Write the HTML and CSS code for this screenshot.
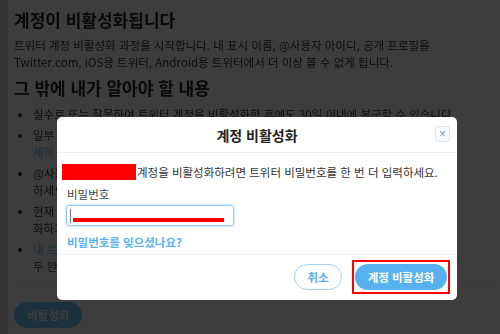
FILE: index.html
```html
<!DOCTYPE html>
<html lang="ko">
<head>
    <meta charset="UTF-8">
    <meta name="viewport" content="width=device-width, initial-scale=1.0">
    <title>계정 비활성화</title>
    <link rel="stylesheet" href="styles.css">
</head>
<body>
    <div id="page" class="dimmed">
        <h1>계정이 비활성화됩니다</h1>
        <p class="intro">트위터 계정 비활성화 과정을 시작합니다. 내 표시 이름, @사용자 아이디, 공개 프로필을<br>Twitter.com, iOS용 트위터, Android용 트위터에서 더 이상 볼 수 없게 됩니다.</p>
        <h2>그 밖에 내가 알아야 할 내용</h2>
        <ul id="notes">
            <li>실수로 또는 잘못하여 트위터 계정을 비활성화한 후에도 30일 이내에 복구할 수 있습니다.</li>
            <li>일부 계정 정보는 Google이나 Bing 같은 검색 엔진에서 계속 보일 수 있습니다. <a href="#">자<br>세히 알아보기</a></li>
            <li>@사용자 아이디만 변경하려면 계정을 비활성화할 필요가 없습니다. 설정에서 수정<br>하세요.</li>
            <li>현재 @사용자 아이디나 이메일 주소를 다른 트위터 계정에 사용하려면 비활성<br>화하기 전에 먼저 변경하세요.</li>
            <li><a href="#">내 트위터 데이터를 다운로드</a>하려면 비활성화하기 전에 요청 및 다운로드를 모<br>두 완료해야 합니다.</li>
        </ul>
        <div id="page-actions">
            <button class="deactivate">비활성화</button>
        </div>
    </div>

    <div id="modal">
        <div class="modal-header">
            <h3>계정 비활성화</h3>
            <button class="close">&times;</button>
        </div>
        <div class="modal-body">
            <p class="confirm-text"><span class="redacted"></span>계정을 비활성화하려면 트위터 비밀번호를 한 번 더 입력하세요.</p>
            <label for="password">비밀번호</label>
            <div class="password-field">
                <span class="caret"></span>
                <span class="redacted-line"></span>
            </div>
            <a class="forgot" href="#">비밀번호를 잊으셨나요?</a>
        </div>
        <div class="modal-footer">
            <button class="btn cancel">취소</button>
            <span class="highlight"><button class="btn primary">계정 비활성화</button></span>
        </div>
    </div>
</body>
</html>
```

FILE: styles.css
```css
body {
    margin: 0;
    background: #353535;
    font-family: "Noto Sans CJK KR", "Noto Sans", sans-serif;
    overflow: hidden;
}
#page {
    margin-left: 8px;
    height: 334px;
    box-sizing: border-box;
    padding: 9px 6px 0;
    background: #fff;
    color: #333;
}
/* page behind the open dialog */
.dimmed {
    filter: brightness(0.24);
}
#page h1,
#page h2 {
    margin: 0;
    font-size: 17px;
    line-height: 22px;
    color: #222;
}
#page h2 {
    margin-top: 6px;
}
.intro {
    margin: 6px 0 0;
    font-size: 11.5px;
    line-height: 17px;
    white-space: nowrap;
}
#notes {
    margin: 7px 0 0;
    padding-left: 19px;
    font-size: 11.5px;
    line-height: 17px;
    white-space: nowrap;
}
#notes li {
    margin-bottom: 4px;
}
#notes a {
    color: #6fc8ff;
    text-decoration: none;
}
#page-actions {
    margin-top: 12px;
    padding-top: 13px;
    border-top: 1px solid #f2f2f2;
}
.deactivate {
    height: 26px;
    padding: 0 13px;
    border: none;
    border-radius: 13px;
    background: #70c4ff;
    color: #fff;
    font-family: inherit;
    font-size: 11.5px;
    font-weight: bold;
}

/* dialog */
#modal {
    position: absolute;
    top: 117px;
    left: 57px;
    width: 400px;
    height: 183px;
    background: #fff;
    border-radius: 5px;
    display: flex;
    flex-direction: column;
    color: #333;
}
.modal-header {
    position: relative;
    height: 35px;
    border-bottom: 1px solid #eceff1;
    display: flex;
    align-items: center;
    justify-content: center;
}
.modal-header h3 {
    margin: 0;
    font-size: 14px;
    color: #222;
}
.close {
    position: absolute;
    top: 9px;
    right: 7px;
    width: 15px;
    height: 16px;
    padding: 0;
    border: 1px solid #e1e8ed;
    border-radius: 3px;
    background: #f7fafc;
    color: #8a9aa6;
    font-size: 12px;
    line-height: 13px;
}
.modal-body {
    height: 102px;
    padding: 11px 10px 0;
    box-sizing: border-box;
    border-bottom: 1px solid #eef1f3;
}
.confirm-text {
    margin: 0;
    font-size: 11.5px;
    line-height: 16px;
    white-space: nowrap;
}
.redacted {
    display: inline-block;
    width: 74px;
    height: 16px;
    margin-left: -5px;
    margin-right: 1px;
    background: #ff0000;
    vertical-align: top;
}
label {
    display: block;
    margin-top: 6px;
    font-size: 11.5px;
    line-height: 16px;
    color: #444;
}
.password-field {
    position: relative;
    width: 168px;
    height: 21px;
    margin-top: 3px;
    margin-left: -1px;
    box-sizing: border-box;
    border: 1px solid #93d0f6;
    border-radius: 3px;
    box-shadow: 0 0 0 1px #d6eefc;
}
.caret {
    position: absolute;
    left: 3px;
    top: 3px;
    width: 1px;
    height: 14px;
    background: #777;
}
.redacted-line {
    position: absolute;
    left: 6px;
    top: 12px;
    width: 151px;
    height: 4px;
    background: #ff0000;
}
.forgot {
    display: block;
    margin-top: 8px;
    font-size: 11.5px;
    line-height: 16px;
    font-weight: bold;
    color: #5ab3ec;
    text-decoration: none;
}
.modal-footer {
    flex: 1;
    display: flex;
    justify-content: flex-end;
    align-items: flex-start;
    gap: 10px;
    padding: 5px 7px 0;
}
.cancel {
    margin-top: 4px;
}
.highlight {
    display: flex;
    padding: 2px 1px;
    border: 2px solid #ff0000;
}
.btn {
    height: 26px;
    border-radius: 13px;
    font-family: inherit;
    font-size: 11.5px;
    font-weight: bold;
}
.btn.cancel {
    width: 48px;
    border: 1px solid #9ed5f7;
    background: #fff;
    color: #55aeea;
}
.btn.primary {
    width: 92px;
    border: none;
    background: #56b1ee;
    color: #fff;
}
```
